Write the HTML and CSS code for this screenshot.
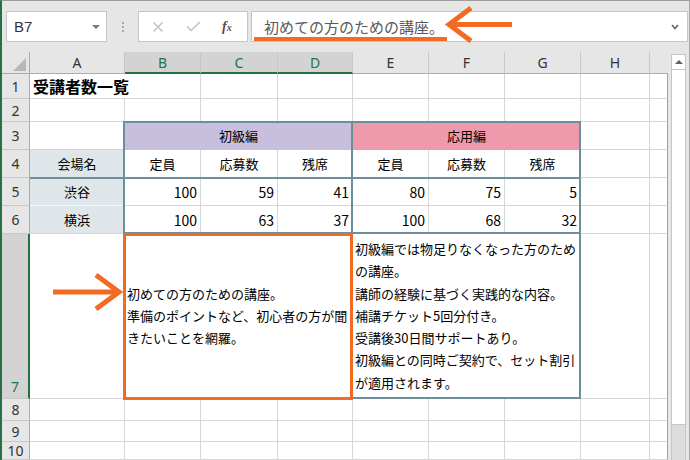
FILE: index.html
```html
<!DOCTYPE html>
<html lang="ja">
<head>
<meta charset="utf-8">
<title>受講者数一覧</title>
<link rel="stylesheet" href="styles.css">
</head>
<body>
<div class="app">
  <div class="toolbar">
    <div class="namebox"><span>B7</span><span class="tri"></span></div>
    <div class="grip"><i></i><i></i><i></i></div>
    <div class="btns">
      <svg class="ico-x" width="12" height="12" viewBox="0 0 12 12"><path d="M1.5 1.5L10.5 10.5M10.5 1.5L1.5 10.5"/></svg>
      <svg class="ico-ok" width="15" height="11" viewBox="0 0 15 11"><path d="M1 5.5L5 9.5L14 1"/></svg>
      <span class="fx">f<small>x</small></span>
    </div>
    <div class="formula"><span class="ftext">初めての方のための講座。</span><svg class="chev" width="8" height="6" viewBox="0 0 8 6"><path d="M1 1L4 4.5L7 1"/></svg></div>
  </div>
  <div class="main">
    <div class="sheet">
      <div class="cells">
        <div class="corner"><span class="corner-tri"></span></div>
        <div class="ch">A</div><div class="ch sel">B</div><div class="ch sel">C</div><div class="ch sel">D</div><div class="ch">E</div><div class="ch">F</div><div class="ch">G</div><div class="ch">H</div><div class="ch ch-last"></div>

        <div class="rh">1</div><div class="c title span2">受講者数一覧</div><div class="c"></div><div class="c"></div><div class="c"></div><div class="c"></div><div class="c"></div><div class="c"></div><div class="c last"></div>

        <div class="rh">2</div><div class="c"></div><div class="c"></div><div class="c"></div><div class="c"></div><div class="c"></div><div class="c"></div><div class="c"></div><div class="c"></div><div class="c last"></div>

        <div class="rh">3</div><div class="c"></div><div class="c ctr purple span3">初級編</div><div class="c ctr pink span3">応用編</div><div class="c"></div><div class="c last"></div>

        <div class="rh">4</div><div class="c ctr blue">会場名</div><div class="c ctr">定員</div><div class="c ctr">応募数</div><div class="c ctr">残席</div><div class="c ctr">定員</div><div class="c ctr">応募数</div><div class="c ctr">残席</div><div class="c"></div><div class="c last"></div>

        <div class="rh">5</div><div class="c ctr blue blue-mid">渋谷</div><div class="c num">100</div><div class="c num">59</div><div class="c num">41</div><div class="c num">80</div><div class="c num">75</div><div class="c num">5</div><div class="c"></div><div class="c last"></div>

        <div class="rh">6</div><div class="c ctr blue">横浜</div><div class="c num">100</div><div class="c num">63</div><div class="c num">37</div><div class="c num">100</div><div class="c num">68</div><div class="c num">32</div><div class="c"></div><div class="c last"></div>

        <div class="rh rh-sel">7</div><div class="c"></div>
        <div class="c wrap span3"><p>初めての方のための講座。<br>準備のポイントなど、初心者の方が聞きたいことを網羅。</p></div>
        <div class="c wrap span3"><p>初級編では物足りなくなった方のための講座。<br>講師の経験に基づく実践的な内容。<br>補講チケット5回分付き。<br>受講後30日間サポートあり。<br>初級編との同時ご契約で、セット割引が適用されます。</p></div>
        <div class="c"></div><div class="c last"></div>

        <div class="rh">8</div><div class="c"></div><div class="c"></div><div class="c"></div><div class="c"></div><div class="c"></div><div class="c"></div><div class="c"></div><div class="c"></div><div class="c last"></div>

        <div class="rh">9</div><div class="c"></div><div class="c"></div><div class="c"></div><div class="c"></div><div class="c"></div><div class="c"></div><div class="c"></div><div class="c"></div><div class="c last"></div>

        <div class="rh">10</div><div class="c"></div><div class="c"></div><div class="c"></div><div class="c"></div><div class="c"></div><div class="c"></div><div class="c"></div><div class="c"></div><div class="c last"></div>
      </div>
      <div class="frames">
        <div class="fr fr-row4"></div>
        <div class="fr fr-b36"></div>
        <div class="fr fr-e36"></div>
        <div class="fr fr-e7"></div>
        <div class="fr fr-b7"></div>
      </div>
    </div>
    <div class="vscroll">
      <div class="track">
        <div class="up"><span class="up-tri"></span></div>
        <div class="thumb"></div>
      </div>
    </div>
  </div>
</div>
<div class="underline"></div>
<svg class="arrow arrow-top" width="80" height="44" viewBox="440 2 80 44"><path class="shaft" d="M450 24.5H512"/><path d="M471 8L449 24.5L471 41"/></svg>
<svg class="arrow arrow-cell" width="80" height="44" viewBox="48 270 80 44"><path class="shaft" d="M53 292H118"/><path d="M96 275L119 292L96 309"/></svg>
</body>
</html>
```

FILE: styles.css
```css
* {
  box-sizing: border-box;
  margin: 0;
  padding: 0;
}

body {
  position: relative;
  width: 690px;
  height: 460px;
  overflow: hidden;
  background: #e6e6e6;
  font-family: "Noto Sans CJK JP", sans-serif;
  color: #000;
}

.app {
  width: 690px;
  height: 460px;
  border-left: 2px solid #2a6e47;
  border-top: 1px solid #9c9c9c;
  border-right: 1px solid #a8a8a8;
  background: #e6e6e6;
  display: flex;
  flex-direction: column;
}

/* ---------- toolbar ---------- */
.toolbar {
  height: 51px;
  flex: none;
  display: flex;
  align-items: flex-start;
  padding-top: 10px;
  padding-left: 4px;
}

.namebox {
  width: 101px;
  height: 31px;
  background: #fff;
  border: 1px solid #c6c6c6;
  display: flex;
  align-items: center;
  justify-content: space-between;
  padding: 0 6px 0 7px;
  font: 15px "Liberation Sans", sans-serif;
  color: #333;
}

.tri {
  width: 0;
  height: 0;
  border-left: 4px solid transparent;
  border-right: 4px solid transparent;
  border-top: 4px solid #777;
}

.grip {
  width: 31px;
  height: 31px;
  display: flex;
  flex-direction: column;
  align-items: center;
  justify-content: center;
  gap: 2px;
}

.grip i {
  width: 2px;
  height: 2px;
  background: #a9a9a9;
}

.btns {
  width: 110px;
  height: 31px;
  background: #fff;
  border: 1px solid #c6c6c6;
  display: flex;
  align-items: center;
  padding-left: 13px;
}

.ico-x path,
.ico-ok path {
  fill: none;
  stroke: #c3c3c3;
  stroke-width: 1.6;
}

.ico-ok {
  margin-left: 22px;
}

.fx {
  margin-left: 21px;
  font: italic bold 14px "Liberation Serif", serif;
  color: #505050;
}

.fx small {
  font-size: 10px;
}

.formula {
  flex: 1;
  margin-left: 3px;
  margin-right: 1px;
  height: 31px;
  background: #fff;
  border: 1px solid #c6c6c6;
  display: flex;
  align-items: center;
  justify-content: space-between;
  padding: 0 8px 0 12px;
}

.ftext {
  font-size: 15px;
  color: #5a5a5a;
  letter-spacing: 0;
}

.chev path {
  fill: none;
  stroke: #666;
  stroke-width: 1.6;
}

/* ---------- sheet ---------- */
.main {
  flex: 1;
  display: flex;
  min-height: 0;
}

.sheet {
  width: 666px;
  display: grid;
  background: #fff;
}

.cells,
.frames {
  grid-area: 1 / 1;
  display: grid;
  grid-template-columns: 28px 95px 76px 77px 75px 76px 76px 76px 69px 18px;
  grid-template-rows: 22px 25px 23px 28px 28px 28px 28px 165px 22px 21px 18px;
}

.frames {
  pointer-events: none;
}

.corner {
  background: #e6e6e6;
  border-right: 1px solid #ababab;
  border-bottom: 1px solid #ababab;
  display: flex;
  align-items: flex-end;
  justify-content: flex-end;
  padding: 0 3px 2px 0;
}

.corner-tri {
  width: 13px;
  height: 13px;
  background: #b7b7b7;
  clip-path: polygon(100% 0, 100% 100%, 0 100%);
}

.ch {
  background: #e6e6e6;
  border-right: 1px solid #c8c8c8;
  border-bottom: 1px solid #ababab;
  display: flex;
  align-items: center;
  justify-content: center;
  font: 14px "Noto Sans", sans-serif;
  color: #333;
}

.ch.sel {
  background: #d3d3d3;
  color: #217346;
  border-bottom: 2px solid #217346;
}

.ch-last {
  border-right: none;
}

.rh {
  background: #e6e6e6;
  border-right: 1px solid #ababab;
  border-bottom: 1px solid #c8c8c8;
  display: flex;
  align-items: center;
  justify-content: center;
  font: 14px "Noto Sans", sans-serif;
  color: #333;
}

.rh-sel {
  background: #d3d3d3;
  color: #217346;
  border-right: 2px solid #217346;
  align-items: flex-end;
  padding-bottom: 2px;
}

.c {
  background: #fff;
  border-right: 1px solid #d6d6d6;
  border-bottom: 1px solid #d6d6d6;
  display: flex;
  align-items: center;
  padding: 0 3px;
  font-size: 13px;
  white-space: nowrap;
  overflow: hidden;
}

.c.last {
  border-right-color: #a3a3a3;
}

.span2 { grid-column: span 2; }
.span3 { grid-column: span 3; }

.title {
  font-size: 16px;
  font-weight: bold;
  padding-left: 3px;
}

.ctr {
  justify-content: center;
}

.num {
  justify-content: flex-end;
  font-size: 14px;
  padding-right: 3px;
}

.purple {
  background: #c8bfdd;
  border-bottom-color: #c8bfdd;
}

.pink {
  background: #ee9aac;
  border-bottom-color: #ee9aac;
}

.blue {
  background: #dee6e9;
}

.blue-mid {
  border-bottom-color: #f4f7f8;
}

.wrap {
  white-space: normal;
  padding-left: 2px;
  padding-right: 0;
}

.wrap p {
  width: 100%;
  line-height: 22.3px;
  font-size: 13px;
}

/* borders drawn over the grid */
.fr {
  border: 0 solid #6b909c;
}

.fr-row4 {
  grid-row: 5;
  grid-column: 2 / 9;
  border-bottom-width: 2px;
  margin-bottom: -1px;
}

.fr-b36 {
  grid-row: 4 / 8;
  grid-column: 3 / 6;
  border-width: 2px;
  margin: -1px 0 0 -2px;
}

.fr-e36 {
  grid-row: 4 / 8;
  grid-column: 6 / 9;
  border-width: 2px;
  margin: -1px 0 0 -2px;
}

.fr-e7 {
  grid-row: 8;
  grid-column: 6 / 9;
  border-width: 2px;
  margin: -2px 0 0 -2px;
}

.fr-b7 {
  grid-row: 8;
  grid-column: 3 / 6;
  border: 3px solid #f26a24;
  margin: -1px 0 -1px -2px;
}

/* ---------- scrollbar ---------- */
.vscroll {
  width: 21px;
  background: #e6e6e6;
  padding: 2px 0 0 3px;
}

.track {
  width: 15px;
  height: 100%;
  background: #dcdcdc;
  border-left: 1px solid #c6c6c6;
  border-right: 1px solid #c6c6c6;
}

.up {
  height: 16px;
  background: #fff;
  border-top: 1px solid #c6c6c6;
  border-bottom: 1px solid #c6c6c6;
  display: flex;
  align-items: center;
  justify-content: center;
}

.up-tri {
  width: 0;
  height: 0;
  border-left: 4px solid transparent;
  border-right: 4px solid transparent;
  border-bottom: 4px solid #606060;
}

.thumb {
  height: 355px;
  background: #fff;
  border-bottom: 1px solid #c6c6c6;
}

/* ---------- annotations ---------- */
.underline {
  position: absolute;
  left: 254px;
  top: 37px;
  width: 193px;
  height: 4px;
  background: #f26a24;
}

.arrow {
  position: absolute;
  overflow: visible;
}

.arrow path {
  fill: none;
  stroke: #f26a24;
  stroke-width: 5;
  stroke-linejoin: miter;
  stroke-miterlimit: 10;
}

.arrow .shaft {
  stroke-width: 5;
}

.arrow-top {
  left: 440px;
  top: 2px;
}

.arrow-cell {
  left: 48px;
  top: 270px;
}
```
